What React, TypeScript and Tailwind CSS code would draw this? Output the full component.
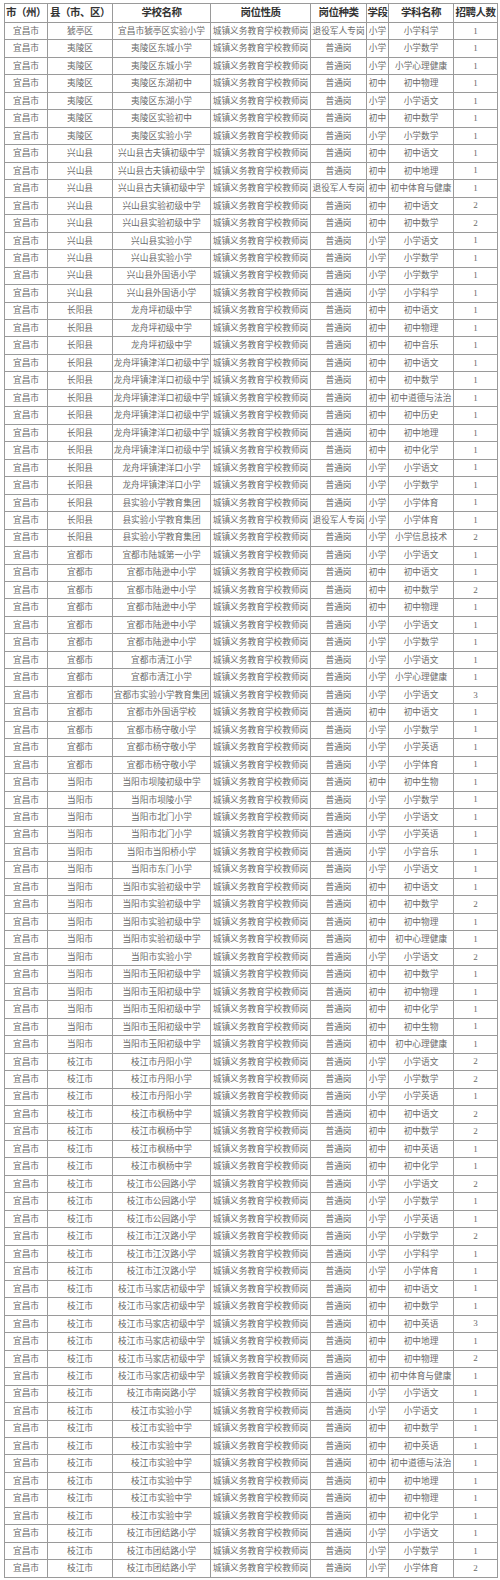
import React from 'react';

type Row = { county: string; school: string; kind: string; stage: string; subject: string; count: number };

const r = (county: string, school: string, stage: string, subject: string, count: number, kind = '普通岗'): Row => ({
  county,
  school,
  kind,
  stage,
  subject,
  count,
});

const VET = '退役军人专岗';

const rows: Row[] = [
  r('猇亭区', '宜昌市猇亭区实验小学', '小学', '小学科学', 1, VET),
  r('夷陵区', '夷陵区东城小学', '小学', '小学数学', 1),
  r('夷陵区', '夷陵区东城小学', '小学', '小学心理健康', 1),
  r('夷陵区', '夷陵区东湖初中', '初中', '初中物理', 1),
  r('夷陵区', '夷陵区东湖小学', '小学', '小学语文', 1),
  r('夷陵区', '夷陵区实验初中', '初中', '初中数学', 1),
  r('夷陵区', '夷陵区实验小学', '小学', '小学数学', 1),
  r('兴山县', '兴山县古夫镇初级中学', '初中', '初中语文', 1),
  r('兴山县', '兴山县古夫镇初级中学', '初中', '初中地理', 1),
  r('兴山县', '兴山县古夫镇初级中学', '初中', '初中体育与健康', 1, VET),
  r('兴山县', '兴山县实验初级中学', '初中', '初中语文', 2),
  r('兴山县', '兴山县实验初级中学', '初中', '初中数学', 2),
  r('兴山县', '兴山县实验小学', '小学', '小学语文', 1),
  r('兴山县', '兴山县实验小学', '小学', '小学数学', 1),
  r('兴山县', '兴山县外国语小学', '小学', '小学数学', 1),
  r('兴山县', '兴山县外国语小学', '小学', '小学科学', 1),
  r('长阳县', '龙舟坪初级中学', '初中', '初中语文', 1),
  r('长阳县', '龙舟坪初级中学', '初中', '初中物理', 1),
  r('长阳县', '龙舟坪初级中学', '初中', '初中音乐', 1),
  r('长阳县', '龙舟坪镇津洋口初级中学', '初中', '初中语文', 1),
  r('长阳县', '龙舟坪镇津洋口初级中学', '初中', '初中数学', 1),
  r('长阳县', '龙舟坪镇津洋口初级中学', '初中', '初中道德与法治', 1),
  r('长阳县', '龙舟坪镇津洋口初级中学', '初中', '初中历史', 1),
  r('长阳县', '龙舟坪镇津洋口初级中学', '初中', '初中地理', 1),
  r('长阳县', '龙舟坪镇津洋口初级中学', '初中', '初中化学', 1),
  r('长阳县', '龙舟坪镇津洋口小学', '小学', '小学语文', 1),
  r('长阳县', '龙舟坪镇津洋口小学', '小学', '小学数学', 1),
  r('长阳县', '县实验小学教育集团', '小学', '小学体育', 1),
  r('长阳县', '县实验小学教育集团', '小学', '小学体育', 1, VET),
  r('长阳县', '县实验小学教育集团', '小学', '小学信息技术', 2),
  r('宜都市', '宜都市陆城第一小学', '小学', '小学语文', 1),
  r('宜都市', '宜都市陆逊中小学', '初中', '初中语文', 1),
  r('宜都市', '宜都市陆逊中小学', '初中', '初中数学', 2),
  r('宜都市', '宜都市陆逊中小学', '初中', '初中物理', 1),
  r('宜都市', '宜都市陆逊中小学', '小学', '小学语文', 1),
  r('宜都市', '宜都市陆逊中小学', '小学', '小学数学', 1),
  r('宜都市', '宜都市清江小学', '小学', '小学语文', 1),
  r('宜都市', '宜都市清江小学', '小学', '小学心理健康', 1),
  r('宜都市', '宜都市实验小学教育集团', '小学', '小学语文', 3),
  r('宜都市', '宜都市外国语学校', '初中', '初中语文', 1),
  r('宜都市', '宜都市杨守敬小学', '小学', '小学数学', 1),
  r('宜都市', '宜都市杨守敬小学', '小学', '小学英语', 1),
  r('宜都市', '宜都市杨守敬小学', '小学', '小学体育', 1),
  r('当阳市', '当阳市坝陵初级中学', '初中', '初中生物', 1),
  r('当阳市', '当阳市坝陵小学', '小学', '小学数学', 1),
  r('当阳市', '当阳市北门小学', '小学', '小学语文', 1),
  r('当阳市', '当阳市北门小学', '小学', '小学英语', 1),
  r('当阳市', '当阳市当阳桥小学', '小学', '小学音乐', 1),
  r('当阳市', '当阳市东门小学', '小学', '小学语文', 1),
  r('当阳市', '当阳市实验初级中学', '初中', '初中语文', 1),
  r('当阳市', '当阳市实验初级中学', '初中', '初中数学', 2),
  r('当阳市', '当阳市实验初级中学', '初中', '初中物理', 1),
  r('当阳市', '当阳市实验初级中学', '初中', '初中心理健康', 1),
  r('当阳市', '当阳市实验小学', '小学', '小学语文', 2),
  r('当阳市', '当阳市玉阳初级中学', '初中', '初中数学', 1),
  r('当阳市', '当阳市玉阳初级中学', '初中', '初中物理', 1),
  r('当阳市', '当阳市玉阳初级中学', '初中', '初中化学', 1),
  r('当阳市', '当阳市玉阳初级中学', '初中', '初中生物', 1),
  r('当阳市', '当阳市玉阳初级中学', '初中', '初中心理健康', 1),
  r('枝江市', '枝江市丹阳小学', '小学', '小学语文', 2),
  r('枝江市', '枝江市丹阳小学', '小学', '小学数学', 2),
  r('枝江市', '枝江市丹阳小学', '小学', '小学英语', 1),
  r('枝江市', '枝江市枫杨中学', '初中', '初中语文', 2),
  r('枝江市', '枝江市枫杨中学', '初中', '初中数学', 2),
  r('枝江市', '枝江市枫杨中学', '初中', '初中英语', 1),
  r('枝江市', '枝江市枫杨中学', '初中', '初中化学', 1),
  r('枝江市', '枝江市公园路小学', '小学', '小学语文', 2),
  r('枝江市', '枝江市公园路小学', '小学', '小学数学', 1),
  r('枝江市', '枝江市公园路小学', '小学', '小学英语', 1),
  r('枝江市', '枝江市江汉路小学', '小学', '小学数学', 2),
  r('枝江市', '枝江市江汉路小学', '小学', '小学科学', 1),
  r('枝江市', '枝江市江汉路小学', '小学', '小学体育', 1),
  r('枝江市', '枝江市马家店初级中学', '初中', '初中语文', 1),
  r('枝江市', '枝江市马家店初级中学', '初中', '初中数学', 1),
  r('枝江市', '枝江市马家店初级中学', '初中', '初中英语', 3),
  r('枝江市', '枝江市马家店初级中学', '初中', '初中地理', 1),
  r('枝江市', '枝江市马家店初级中学', '初中', '初中物理', 2),
  r('枝江市', '枝江市马家店初级中学', '初中', '初中体育与健康', 1),
  r('枝江市', '枝江市南岗路小学', '小学', '小学语文', 1),
  r('枝江市', '枝江市实验小学', '小学', '小学语文', 1),
  r('枝江市', '枝江市实验中学', '初中', '初中数学', 1),
  r('枝江市', '枝江市实验中学', '初中', '初中英语', 1),
  r('枝江市', '枝江市实验中学', '初中', '初中道德与法治', 1),
  r('枝江市', '枝江市实验中学', '初中', '初中地理', 1),
  r('枝江市', '枝江市实验中学', '初中', '初中物理', 1),
  r('枝江市', '枝江市实验中学', '初中', '初中化学', 1),
  r('枝江市', '枝江市团结路小学', '小学', '小学语文', 1),
  r('枝江市', '枝江市团结路小学', '小学', '小学数学', 1),
  r('枝江市', '枝江市团结路小学', '小学', '小学体育', 2),
];

const headers = ['市（州）', '县（市、区）', '学校名称', '岗位性质', '岗位种类', '学段', '学科名称', '招聘人数'];
const widths = ['w-[43px]', 'w-[65px]', 'w-[98px]', 'w-[100px]', 'w-[56px]', 'w-[22px]', 'w-[65px]', 'w-[44px]'];

const cell = 'border border-[#9a9a9a] p-0 text-center whitespace-nowrap overflow-hidden leading-none';

const App: React.FC = () => {
  return (
    <div className="w-[500px] bg-white pt-[3px] pl-[4px] font-['Liberation_Serif','Noto_Sans_CJK_SC',serif]">
      <table className="table-fixed border-collapse w-[493px] border border-[#7a7a7a]">
        <colgroup>
          {widths.map((w, i) => (
            <col key={i} className={w} />
          ))}
        </colgroup>
        <thead>
          <tr className="h-[19px]">
            {headers.map(h => (
              <th key={h} className={`${cell} text-[10.5px] font-bold text-[#333333] tracking-[-0.5px]`}>
                {h}
              </th>
            ))}
          </tr>
        </thead>
        <tbody className="text-[8.7px] text-[#6a6a6a]">
          {rows.map((row, i) => (
            <tr key={i} className="h-[17.47px]">
              <td className={cell}>宜昌市</td>
              <td className={cell}>{row.county}</td>
              <td className={cell}>{row.school}</td>
              <td className={cell}>城镇义务教育学校教师岗</td>
              <td className={cell}>{row.kind}</td>
              <td className={cell}>{row.stage}</td>
              <td className={cell}>{row.subject}</td>
              <td className={`${cell} text-[9px]`}>{row.count}</td>
            </tr>
          ))}
        </tbody>
      </table>
    </div>
  );
};

export default App;
